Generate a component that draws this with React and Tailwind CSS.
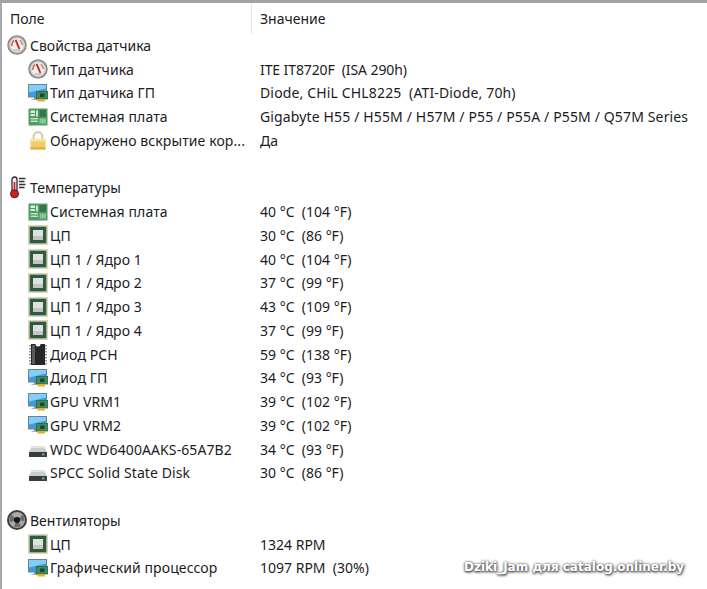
import React from 'react';

function Gauge() {
  return (
    <svg width="20" height="20" viewBox="0 0 20 20" className="shrink-0">
      <circle cx="10" cy="10" r="8.8" fill="#f1eeea" stroke="#8f8f8f" strokeWidth="2" />
      <circle cx="10" cy="10" r="7" fill="none" stroke="#c9c6c2" strokeWidth="0.8" />
      <path d="M4.6 11 Q4.6 7.5 7 5.4" fill="none" stroke="#cf5f5f" strokeWidth="1.6" />
      <path d="M8.6 4.8 L12.4 14" stroke="#b92e2e" strokeWidth="1.9" />
      <path d="M12.8 5.2 Q15.2 7 15.5 10" fill="none" stroke="#d57a7a" strokeWidth="1.4" />
      <path d="M6.5 15 H13.5" stroke="#b9b5b0" strokeWidth="1.2" />
    </svg>
  );
}

function Monitor() {
  return (
    <svg width="20" height="20" viewBox="0 0 20 20" className="shrink-0">
      <rect x="0.5" y="1.5" width="18" height="12.5" fill="#3f9bdc" stroke="#64849a" />
      <path d="M1 2 H18 V5.5 L1 9.5 Z" fill="#86cdf5" />
      <rect x="6" y="14" width="5" height="2" fill="#7c8c98" />
      <rect x="3.5" y="16" width="9" height="1" fill="#aab4bc" />
      <rect x="8.5" y="8.5" width="11.5" height="7.5" fill="#3f8a5e" stroke="#2f6448" strokeWidth="0.8" />
      <rect x="12" y="10.5" width="4.5" height="3.5" fill="#22452f" />
      <rect x="9.5" y="16" width="7.5" height="2.5" fill="#efa92a" />
    </svg>
  );
}

function Board() {
  return (
    <svg width="20" height="20" viewBox="0 0 20 20" className="shrink-0">
      <rect x="0.5" y="1.5" width="19" height="17" fill="#4f9b63" />
      <rect x="2.5" y="3.5" width="4.5" height="2.5" fill="#dcefdf" />
      <rect x="2.5" y="7" width="4.5" height="2" fill="#dcefdf" />
      <rect x="8" y="3.5" width="2" height="6" fill="#c9e4cf" />
      <rect x="2.5" y="11" width="7.5" height="1.4" fill="#c9e4cf" />
      <rect x="2.5" y="13.6" width="7.5" height="1.4" fill="#c9e4cf" />
      <rect x="11.5" y="3" width="6.5" height="7" fill="#357547" />
      <rect x="11.5" y="11.5" width="6.5" height="5" fill="#8cc49a" />
    </svg>
  );
}

function Lock() {
  return (
    <svg width="20" height="20" viewBox="0 0 20 20" className="shrink-0">
      <path d="M5.7 10 V6.5 a4.3 4.3 0 0 1 8.6 0 V10" fill="none" stroke="#d9cda8" strokeWidth="2.2" />
      <rect x="2.5" y="9" width="15" height="10.5" fill="#f2cd66" />
      <rect x="2.5" y="9" width="15" height="2.5" fill="#f8e3a2" />
      <rect x="2.5" y="17" width="15" height="2.5" fill="#dfb448" />
    </svg>
  );
}

function Thermo() {
  return (
    <svg width="20" height="24" viewBox="0 0 20 24" className="shrink-0">
      <rect x="5" y="1" width="5" height="15" rx="2.5" fill="#f6f0ee" stroke="#33282a" strokeWidth="1.3" />
      <rect x="6.6" y="6" width="1.8" height="11" fill="#d6201f" />
      <circle cx="7.5" cy="17.8" r="4" fill="#d6201f" stroke="#3f1c1c" strokeWidth="1" />
      <path d="M12 2.5 H18.5 M12 5.5 H17.5 M12 8.5 H18.5 M12 11.5 H17.5" stroke="#333" strokeWidth="1.4" />
    </svg>
  );
}

function Chip() {
  return (
    <svg width="20" height="20" viewBox="0 0 20 20" className="shrink-0">
      <rect x="0.5" y="0.5" width="19" height="19" fill="none" stroke="#c9a64c" strokeWidth="1" strokeDasharray="1 1" />
      <rect x="1.5" y="1.5" width="17" height="17" fill="#2f5a44" />
      <rect x="5" y="5" width="10" height="10" fill="#e0e0dc" />
      <rect x="5" y="11" width="10" height="4" fill="#c4c6c2" />
    </svg>
  );
}

function Pch() {
  return (
    <svg width="20" height="23" viewBox="0 0 20 23" className="shrink-0">
      <path d="M3 1 H7.5 a2.5 2.5 0 0 0 5 0 H17 V22 H3 Z" fill="#262626" />
      <path d="M4 2 H7 V21 H4 Z" fill="#5a5a5a" />
      <path d="M2 2 V22 M18 2 V22" stroke="#9a9a9a" strokeWidth="2" strokeDasharray="1.5 1.5" />
    </svg>
  );
}

function Disk() {
  return (
    <svg width="20" height="20" viewBox="0 0 20 20" className="shrink-0">
      <path d="M4 7 H16 L19 13 H1 Z" fill="#cdcdcd" />
      <path d="M4 7 H16 L17 9 H3 Z" fill="#e2e2e2" />
      <rect x="1" y="13" width="18" height="5" rx="0.5" fill="#3a3a3a" />
      <rect x="14" y="14.5" width="2.5" height="1.8" fill="#4fd06a" />
    </svg>
  );
}

function Fan() {
  return (
    <svg width="20" height="20" viewBox="0 0 20 20" className="shrink-0">
      <circle cx="10" cy="10" r="9" fill="#a9a9a9" stroke="#3d3d3d" strokeWidth="2" />
      <path d="M10 10 L4.5 4.5 A8 8 0 0 0 3 12 Z M10 10 L16 4.5 A8 8 0 0 1 17 11 Z M10 10 L7 16.5 A8 8 0 0 0 14 16 Z" fill="#6a6a6a" />
      <circle cx="10" cy="10" r="3" fill="#161616" />
    </svg>
  );
}

const sections = [
  {
    icon: Gauge,
    title: 'Свойства датчика',
    rows: [
      [Gauge, 'Тип датчика', 'ITE IT8720F\u00a0 (ISA 290h)', 'tracking-[-0.1px]'],
      [Monitor, 'Тип датчика ГП', 'Diode, CHiL CHL8225\u00a0 (ATI-Diode, 70h)', 'tracking-[0.15px]'],
      [Board, 'Системная плата', 'Gigabyte H55 / H55M / H57M / P55 / P55A / P55M / Q57M Series', 'tracking-[0.14px]'],
      [Lock, 'Обнаружено вскрытие кор...', 'Да'],
    ],
  },
  {
    icon: Thermo,
    title: 'Температуры',
    rows: [
      [Board, 'Системная плата', '40 °C\u00a0 (104 °F)'],
      [Chip, 'ЦП', '30 °C\u00a0 (86 °F)'],
      [Chip, 'ЦП 1 / Ядро 1', '40 °C\u00a0 (104 °F)'],
      [Chip, 'ЦП 1 / Ядро 2', '37 °C\u00a0 (99 °F)'],
      [Chip, 'ЦП 1 / Ядро 3', '43 °C\u00a0 (109 °F)'],
      [Chip, 'ЦП 1 / Ядро 4', '37 °C\u00a0 (99 °F)'],
      [Pch, 'Диод PCH', '59 °C\u00a0 (138 °F)'],
      [Monitor, 'Диод ГП', '34 °C\u00a0 (93 °F)'],
      [Monitor, 'GPU VRM1', '39 °C\u00a0 (102 °F)'],
      [Monitor, 'GPU VRM2', '39 °C\u00a0 (102 °F)'],
      [Disk, 'WDC WD6400AAKS-65A7B2', '34 °C\u00a0 (93 °F)'],
      [Disk, 'SPCC Solid State Disk', '30 °C\u00a0 (86 °F)'],
    ],
  },
  {
    icon: Fan,
    title: 'Вентиляторы',
    rows: [
      [Chip, 'ЦП', '1324 RPM'],
      [Monitor, 'Графический процессор', '1097 RPM\u00a0 (30%)'],
    ],
  },
];

function Row({ icon: Icon, name, value, valueClass, indent }) {
  return (
    <div className="flex h-[23.75px] items-center whitespace-nowrap">
      <div className={`flex w-[258px] items-center ${indent ? 'gap-[2px] pl-[26px] tracking-[0.1px]' : 'gap-[3px] pl-[5px]'}`}>
        <Icon />
        <span>{name}</span>
      </div>
      {value && <span className={valueClass}>{value}</span>}
    </div>
  );
}

export default function App() {
  return (
    <div className="relative flex h-[589px] w-[707px] flex-col overflow-hidden bg-white font-['Noto_Sans',sans-serif] text-[14px] text-[#1c1c24]">
      <div className="h-[3px] shrink-0 bg-[#a3a3a3]" />
      <div className="min-h-0 flex-1 border-l-2 border-[#a6aab0]">
        {/* Header */}
        <div className="flex h-[30.5px] items-center">
          <div className="w-[249px] pl-[8px]">Поле</div>
          <div className="h-full w-px bg-[#e6e6e6]" />
          <div className="pl-[8px]">Значение</div>
        </div>

        {sections.map((section) => (
          <div key={section.title} className="mb-[23.75px]">
            <Row icon={section.icon} name={section.title} />
            {section.rows.map(([icon, name, value, valueClass]) => (
              <Row key={name + value} icon={icon} name={name} value={value} valueClass={valueClass} indent />
            ))}
          </div>
        ))}
      </div>

      {/* Watermark */}
      <div className="absolute left-[464px] top-[558px] font-['DejaVu_Sans',sans-serif] text-[12px] font-bold whitespace-nowrap text-white [text-shadow:0_0_3px_#666,1px_1px_3px_#555,0_1px_2px_#555]">
        Dziki_Jam для catalog.onliner.by
      </div>
    </div>
  );
}
